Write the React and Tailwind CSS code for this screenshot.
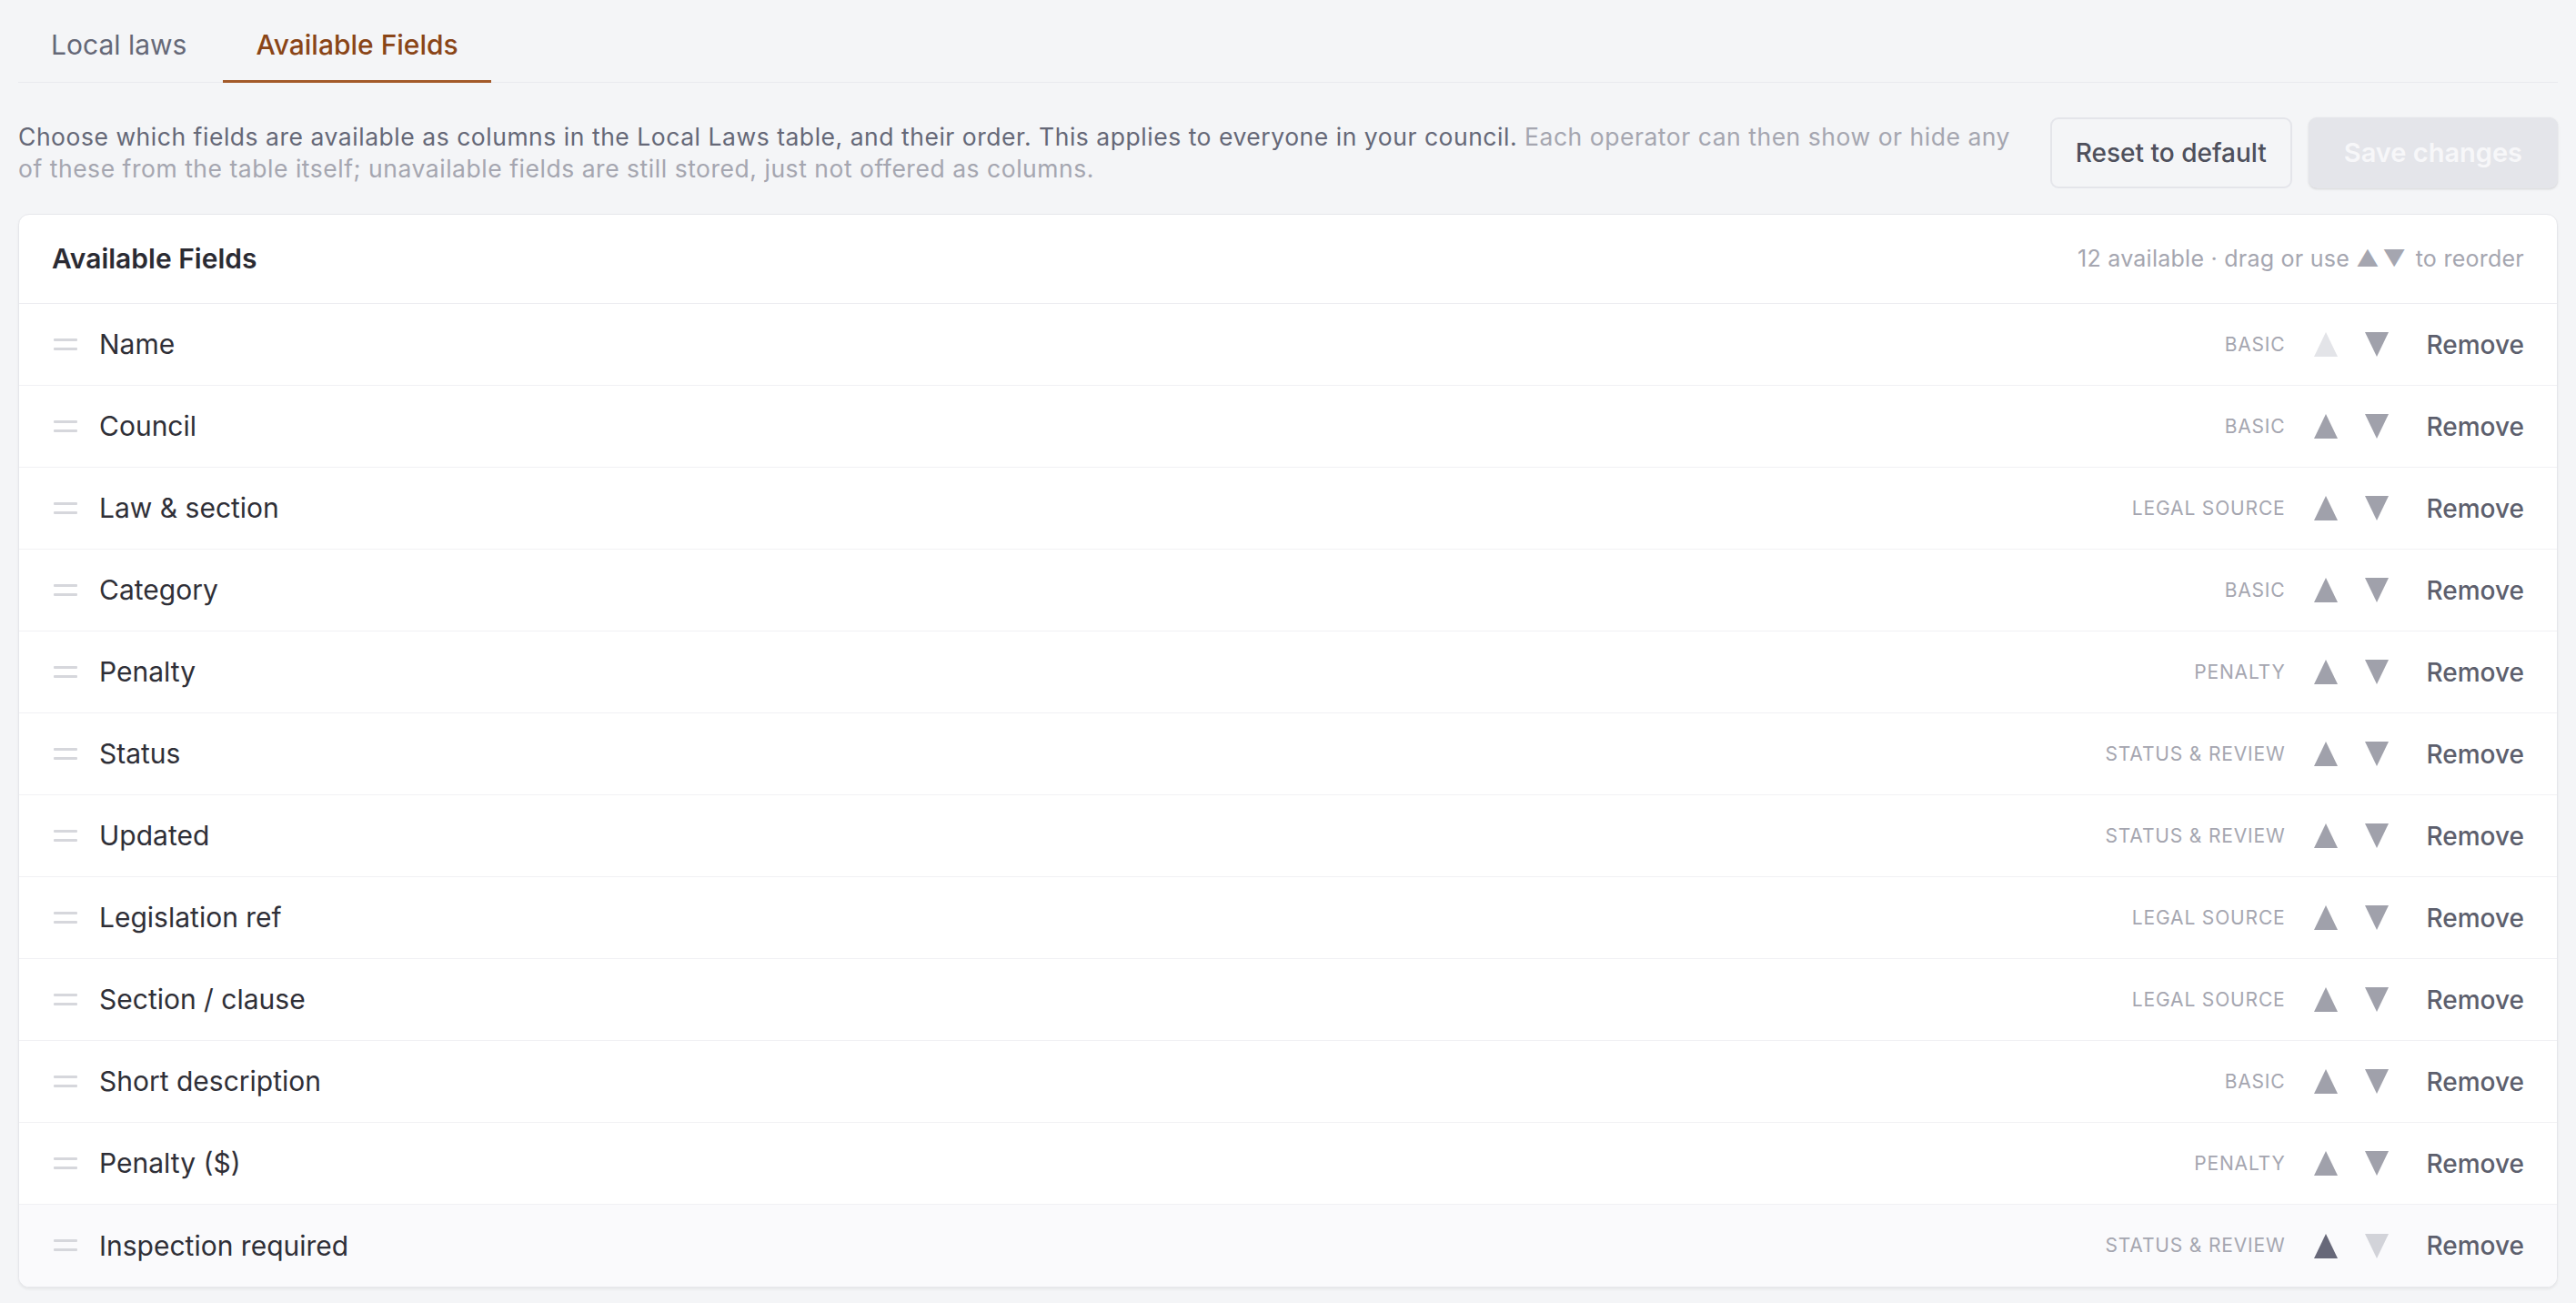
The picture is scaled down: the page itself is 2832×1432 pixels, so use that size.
import { useState } from 'react';

const FIELDS = [
  { id: 'name', label: 'Name', group: 'Basic' },
  { id: 'council', label: 'Council', group: 'Basic' },
  { id: 'law', label: 'Law & section', group: 'Legal source' },
  { id: 'category', label: 'Category', group: 'Basic' },
  { id: 'penalty', label: 'Penalty', group: 'Penalty' },
  { id: 'status', label: 'Status', group: 'Status & review' },
  { id: 'updated', label: 'Updated', group: 'Status & review' },
  { id: 'legref', label: 'Legislation ref', group: 'Legal source' },
  { id: 'clause', label: 'Section / clause', group: 'Legal source' },
  { id: 'short', label: 'Short description', group: 'Basic' },
  { id: 'penaltyAmt', label: 'Penalty ($)', group: 'Penalty' },
  { id: 'inspection', label: 'Inspection required', group: 'Status & review' },
];

function UpTriangle({ className }) {
  return (
    <svg width="26" height="27" viewBox="0 0 26 27" className={className} aria-hidden="true">
      <polygon points="13,0 26,27 0,27" fill="currentColor" />
    </svg>
  );
}

function DownTriangle({ className }) {
  return (
    <svg width="26" height="27" viewBox="0 0 26 27" className={className} aria-hidden="true">
      <polygon points="0,0 26,0 13,27" fill="currentColor" />
    </svg>
  );
}

function DragHandle() {
  return (
    <svg width="26" height="14" viewBox="0 0 26 14" className="ml-[2px] shrink-0 text-[#d6d7dc]" aria-hidden="true">
      <rect x="0" y="0" width="26" height="3" rx="1" fill="currentColor" />
      <rect x="0" y="10" width="26" height="3" rx="1" fill="currentColor" />
    </svg>
  );
}

function FieldRow({ field, isFirst, isLast, highlighted }) {
  const upColor = isFirst
    ? 'text-[#e3e4e8]'
    : highlighted
      ? 'text-[#676879]'
      : 'text-[#a0a1ab]';
  const downColor = isLast ? 'text-[#d2d3d9]' : 'text-[#a0a1ab]';

  return (
    <div
      className={`flex h-[90px] items-center px-9 ${isLast ? '' : 'border-b border-[#f1f1f4]'} ${highlighted ? 'bg-[#fafafc]' : 'bg-white'}`}
    >
      <DragHandle />
      <span className="ml-[24px] flex-1 text-[30px] text-[#2f2f37]">{field.label}</span>

      <span className="text-[21px] uppercase tracking-[0.04em] text-[#a5a6b0]">{field.group}</span>

      <button type="button" className={`ml-4 px-[15px] py-1 ${upColor}`} aria-label="Move up">
        <UpTriangle />
      </button>
      <button type="button" className={`px-[15px] py-1 ${downColor}`} aria-label="Move down">
        <DownTriangle />
      </button>

      <button type="button" className="ml-[27px] text-[28px] font-medium text-[#5d5f6d]">
        Remove
      </button>
    </div>
  );
}

export default function App() {
  const [tab, setTab] = useState('fields');

  const tabClass = (key) =>
    `-mb-px border-b-[3px] px-9 pt-[27px] pb-[16px] text-[30px] leading-[45px] ${
      tab === key ? 'border-[#a35a2a] font-medium text-[#8a4517]' : 'border-transparent text-[#656877]'
    }`;

  return (
    <div className="min-h-screen bg-[#f4f5f7] px-5 font-['Inter','Liberation_Sans',sans-serif]">
      {/* Tabs */}
      <div className="flex gap-[4px] border-b border-[#e9eaee]">
        <button type="button" onClick={() => setTab('laws')} className={tabClass('laws')}>
          Local laws
        </button>
        <button type="button" onClick={() => setTab('fields')} className={tabClass('fields')}>
          Available Fields
        </button>
      </div>

      {/* Description + actions */}
      <div className="mt-[38px] flex items-center gap-[28px]">
        <p className="flex-1 text-[26.5px] leading-[35px] tracking-[0.02em] text-[#656877]">
          Choose which fields are available as columns in the Local Laws table, and their order. This applies to
          everyone in your council.{' '}
          <span className="text-[#a5a6b0]">
            Each operator can then show or hide any of these from the table itself; unavailable fields are still
            stored, just not offered as columns.
          </span>
        </p>
        <div className="flex shrink-0 items-center gap-[18px]">
          <button
            type="button"
            className="h-[78px] rounded-[9px] border-2 border-[#e4e5ea] px-[26px] text-[28px] font-medium text-[#4e505c]"
          >
            Reset to default
          </button>
          <button
            type="button"
            disabled
            className="h-[78px] rounded-[9px] bg-[#e4e5ea] px-[39px] text-[29px] font-semibold text-[#f7f7f9] shadow-sm"
          >
            Save changes
          </button>
        </div>
      </div>

      {/* Fields card */}
      <div className="mt-[28px] overflow-hidden rounded-[12px] border border-[#e6e7eb] bg-white shadow-[0_2px_3px_rgba(0,0,0,0.06)]">
        <div className="flex h-[98px] items-center justify-between border-b border-[#ececf0] px-9">
          <h2 className="text-[30px] font-semibold text-[#2b2b33]">Available Fields</h2>
          <span className="text-[25px] tracking-[0.01em] text-[#a5a6b0]">
            12 available · drag or use <span className="tracking-[0.15em]">▲▼</span> to reorder
          </span>
        </div>
        {FIELDS.map((field, i) => (
          <FieldRow
            key={field.id}
            field={field}
            isFirst={i === 0}
            isLast={i === FIELDS.length - 1}
            highlighted={i === FIELDS.length - 1}
          />
        ))}
      </div>
    </div>
  );
}
